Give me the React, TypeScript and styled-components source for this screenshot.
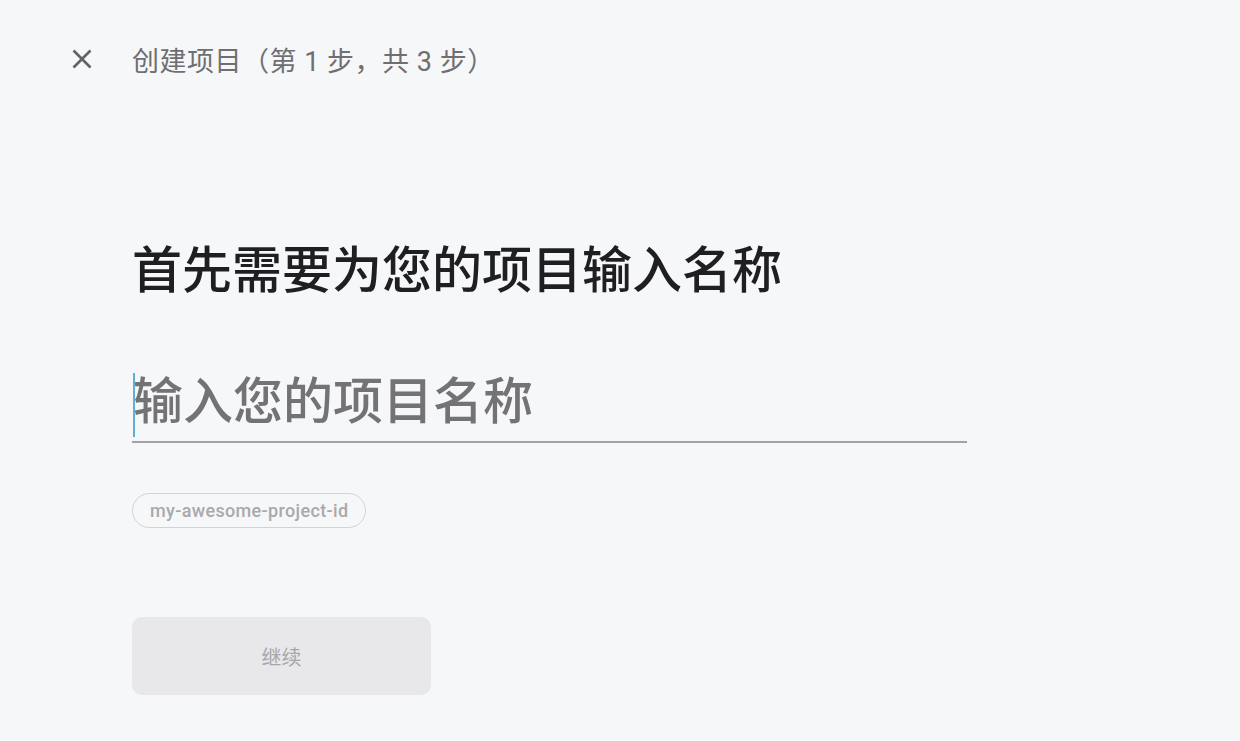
import React, { useState } from "react";
import styled, { createGlobalStyle } from "styled-components";

const GlobalStyle = createGlobalStyle`
    html, body {
        margin: 0;
        padding: 0;
        background: #f6f7f9;
    }
    body {
        font-family: Roboto, "Noto Sans CJK SC", "Noto Sans", sans-serif;
    }
`;

const Page = styled.div`
    width: 100%;
    min-height: 741px;
    background: #f6f7f9;
    box-sizing: border-box;
`;

const Header = styled.div`
    display: flex;
    align-items: center;
    height: 60px;
    padding: 29px 0 0 68px;
`;

const CloseButton = styled.button`
    display: flex;
    align-items: center;
    justify-content: center;
    width: 28px;
    height: 28px;
    padding: 0;
    margin-right: 36px;
    border: none;
    background: transparent;
    color: #636366;
    cursor: pointer;
`;

const StepTitle = styled.div`
    font-size: 27px;
    color: #6f6f72;
    letter-spacing: 0.5px;
`;

const Content = styled.div`
    display: flex;
    flex-direction: column;
    align-items: flex-start;
    padding: 150px 0 0 132px;
`;

const Heading = styled.h1`
    margin: 0;
    font-size: 50px;
    font-weight: 500;
    color: #1f1f21;
    line-height: 64px;
`;

const Field = styled.div`
    position: relative;
    margin-top: 64px;
`;

const NameInput = styled.input`
    display: block;
    width: 834px;
    height: 69px;
    padding: 0 0 5px 1px;
    border: none;
    border-bottom: 2px solid #a3a3a6;
    background: transparent;
    font-family: Roboto, "Noto Sans CJK SC", sans-serif;
    font-size: 50px;
    font-weight: 500;
    color: #202124;
    caret-color: #4fa3c7;
    outline: none;
    box-sizing: content-box;
    &::placeholder {
        color: #737375;
    }
`;

const Caret = styled.span`
    position: absolute;
    left: 1px;
    top: 6px;
    width: 1.5px;
    height: 64px;
    background: #62afd4;
    pointer-events: none;
`;

const IdChip = styled.div`
    margin-top: 50px;
    height: 33px;
    padding: 0 17px;
    display: flex;
    align-items: center;
    border: 1px solid #d3d3d6;
    border-radius: 18px;
    font-size: 18px;
    font-weight: 500;
    letter-spacing: 0.35px;
    color: #a9a9ac;
`;

const ContinueButton = styled.button<{ $enabled: boolean }>`
    margin-top: 89px;
    width: 299px;
    height: 78px;
    border: none;
    border-radius: 10px;
    background: ${p => (p.$enabled ? "#1a73e8" : "#e8e8ea")};
    color: ${p => (p.$enabled ? "#fff" : "#a6a6a8")};
    font-family: "Noto Sans CJK SC", sans-serif;
    font-size: 20px;
    cursor: ${p => (p.$enabled ? "pointer" : "default")};
`;

const App = () => {
    const [name, setName] = useState<string>("");
    const projectId = name
        ? name.toLowerCase().replace(/[^a-z0-9]+/g, "-").replace(/^-|-$/g, "") || "my-awesome-project-id"
        : "my-awesome-project-id";
    return (
        <Page>
            <GlobalStyle />
            <Header>
                <CloseButton aria-label="close">
                    <svg width="22" height="22" viewBox="0 0 22 22">
                        <path d="M2.5 2.5 L19.5 19.5 M19.5 2.5 L2.5 19.5" stroke="currentColor" strokeWidth="2.6" fill="none" />
                    </svg>
                </CloseButton>
                <StepTitle>创建项目（第 1 步，共 3 步）</StepTitle>
            </Header>
            <Content>
                <Heading>首先需要为您的项目输入名称</Heading>
                <Field>
                    <NameInput
                        value={name}
                        placeholder="输入您的项目名称"
                        onChange={e => setName(e.target.value)}
                    />
                    {name.length === 0 && <Caret />}
                </Field>
                <IdChip>{projectId}</IdChip>
                <ContinueButton $enabled={name.length > 0}>继续</ContinueButton>
            </Content>
        </Page>
    );
};

export default App;
